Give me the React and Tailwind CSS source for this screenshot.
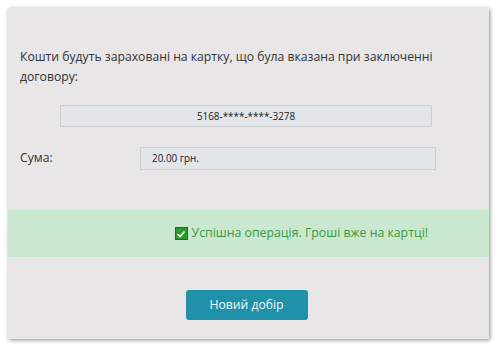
export default function App() {
  return (
    <div className="w-[498px] h-[347px] bg-white pt-[8px] pl-[8px]" style={{ fontFamily: '"Open Sans", "Noto Sans", sans-serif' }}>
      <div className="w-[481px] h-[331px] bg-[#e8e6e6] shadow-[1px_1px_4px_rgba(0,0,0,0.45)] flex flex-col">
        <div className="px-[12px] pt-[39px] text-[12.2px] leading-[20px] text-[#333]">
          Кошти будуть зараховані на картку, що була вказана при заключенні договору:
        </div>
        <div className="mt-[18px] ml-[52px] w-[372px] h-[22px] bg-[#e3e6e9] border border-[#cfcfcf] flex items-center justify-center text-[9.9px] text-[#1a1a1a]">
          5168-****-****-3278
        </div>
        <div className="mt-[20px] flex items-center h-[23px]">
          <div className="pl-[12px] w-[132px] text-[12.2px] text-[#333]">Сума:</div>
          <div className="w-[296px] h-[23px] bg-[#e3e6e9] border border-[#cfcfcf] flex items-center pl-[11px] text-[9.9px] text-[#1a1a1a]">
            20.00 грн.
          </div>
        </div>
        <div className="mt-[40px] h-[47px] bg-[#c9e8cf] flex items-center justify-end pr-[61px] gap-[4px] text-[12.3px] text-[#3a9a3e]">
          <span className="w-[13px] h-[13px] bg-[#2a9a2a] border border-[#1d6e1d] flex items-center justify-center">
            <svg width="10" height="10" viewBox="0 0 10 10">
              <path d="M1.5 5.2 L4 7.5 L8.5 2.5" fill="none" stroke="white" strokeWidth="1.6" />
            </svg>
          </span>
          <span>Успішна операція. Гроші вже на картці!</span>
        </div>
        <div className="mt-[33px] flex justify-center pr-[4px]">
          <button className="w-[122px] h-[30px] rounded-[3px] bg-[#1f91a8] text-[#eef8fa] text-[12.2px]">Новий добір</button>
        </div>
      </div>
    </div>
  );
}
